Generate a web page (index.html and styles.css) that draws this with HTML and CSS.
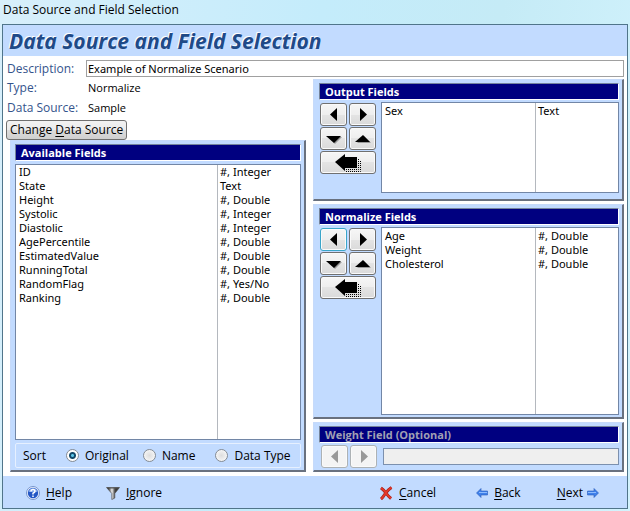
FILE: index.html
```html
<!DOCTYPE html>
<html lang="en">
<head>
<meta charset="utf-8">
<title>Data Source and Field Selection</title>
<link rel="stylesheet" href="styles.css">
</head>
<body>
<svg class="sprite" aria-hidden="true">
  <symbol id="left" viewBox="0 0 16 16"><path d="M11 1v13L4 7.500z" fill="currentColor"/></symbol>
  <symbol id="right" viewBox="0 0 16 16"><path d="M5 1v13l7-6.500z" fill="currentColor"/></symbol>
  <symbol id="down" viewBox="0 0 16 16"><path d="M2 6h14l-7 7z" fill="#999"/><path d="M0 5h15l-7 7z" fill="currentColor"/></symbol>
  <symbol id="up" viewBox="0 0 16 16"><path d="M2 12h14l-7-7z" fill="#999"/><path d="M0 11h15L8 4z" fill="currentColor"/></symbol>
  <symbol id="all" viewBox="0 0 26 18"><path d="M11 17.500h14.500V6M11 15.500h12.500V4" fill="none" stroke="#000" stroke-dasharray="1 1"/><path d="M0 8l10-8v3h12v11H10v3z" fill="#000"/></symbol>
</svg>
<div class="desktop">
  <div class="titlebar">Data Source and Field Selection</div>
  <main class="window">
    <h1 class="heading">Data Source and Field Selection</h1>
    <div class="content">
      <div class="description">
        <label class="label" for="description">Description:</label>
        <input class="text-input" id="description" type="text" value="Example of Normalize Scenario">
      </div>
      <div class="columns">
        <div class="left">
          <dl class="facts">
            <dt class="label">Type:</dt><dd>Normalize</dd>
            <dt class="label">Data Source:</dt><dd>Sample</dd>
          </dl>
          <button class="change" type="button">Change <u>D</u>ata Source</button>
          <section class="panel available">
            <h2 class="bar">Available Fields</h2>
            <div class="list">
              <table class="fields">
                <tr><td>ID</td><td>#, Integer</td></tr>
                <tr><td>State</td><td>Text</td></tr>
                <tr><td>Height</td><td>#, Double</td></tr>
                <tr><td>Systolic</td><td>#, Integer</td></tr>
                <tr><td>Diastolic</td><td>#, Integer</td></tr>
                <tr><td>AgePercentile</td><td>#, Double</td></tr>
                <tr><td>EstimatedValue</td><td>#, Double</td></tr>
                <tr><td>RunningTotal</td><td>#, Double</td></tr>
                <tr><td>RandomFlag</td><td>#, Yes/No</td></tr>
                <tr><td>Ranking</td><td>#, Double</td></tr>
              </table>
            </div>
            <div class="sort" role="radiogroup" aria-labelledby="sort-label">
              <span class="sort-label" id="sort-label">Sort</span>
              <label class="choice"><input type="radio" name="sort" checked>Original</label>
              <label class="choice"><input type="radio" name="sort">Name</label>
              <label class="choice"><input type="radio" name="sort">Data Type</label>
            </div>
          </section>
        </div>
        <div class="right">
          <section class="panel output">
            <h2 class="bar">Output Fields</h2>
            <div class="picker">
              <div class="moves">
                <button class="move" type="button" aria-label="Remove from output"><svg class="glyph"><use href="#left"/></svg></button>
                <button class="move" type="button" aria-label="Add to output"><svg class="glyph"><use href="#right"/></svg></button>
                <button class="move" type="button" aria-label="Move output down"><svg class="glyph"><use href="#down"/></svg></button>
                <button class="move" type="button" aria-label="Move output up"><svg class="glyph"><use href="#up"/></svg></button>
                <button class="move wide" type="button" aria-label="Remove all output"><svg class="glyph-all"><use href="#all"/></svg></button>
              </div>
              <div class="list">
                <table class="fields"><tr><td>Sex</td><td>Text</td></tr></table>
              </div>
            </div>
          </section>
          <section class="panel normalize">
            <h2 class="bar">Normalize Fields</h2>
            <div class="picker">
              <div class="moves">
                <button class="move active" type="button" aria-label="Remove from normalize"><svg class="glyph"><use href="#left"/></svg></button>
                <button class="move" type="button" aria-label="Add to normalize"><svg class="glyph"><use href="#right"/></svg></button>
                <button class="move" type="button" aria-label="Move normalize down"><svg class="glyph"><use href="#down"/></svg></button>
                <button class="move" type="button" aria-label="Move normalize up"><svg class="glyph"><use href="#up"/></svg></button>
                <button class="move wide" type="button" aria-label="Remove all normalize"><svg class="glyph-all"><use href="#all"/></svg></button>
              </div>
              <div class="list">
                <table class="fields">
                  <tr><td>Age</td><td>#, Double</td></tr>
                  <tr><td>Weight</td><td>#, Double</td></tr>
                  <tr><td>Cholesterol</td><td>#, Double</td></tr>
                </table>
              </div>
            </div>
          </section>
          <section class="panel weight">
            <h2 class="bar muted"><label for="weight">Weight Field (Optional)</label></h2>
            <div class="weight-row">
              <button class="move" type="button" disabled aria-label="Remove weight"><svg class="glyph"><use href="#left"/></svg></button>
              <button class="move" type="button" disabled aria-label="Set weight"><svg class="glyph"><use href="#right"/></svg></button>
              <input class="weight-input" id="weight" type="text" disabled>
            </div>
          </section>
        </div>
      </div>
    </div>
    <footer class="actions">
      <button class="action help" type="button">
        <svg class="icon" viewBox="0 0 14 14"><circle cx="7" cy="7" r="6.500" fill="#eef4ff" stroke="#7895cc"/><circle cx="7" cy="7" r="5.200" fill="#2457c5"/><path d="M2.500 6a4.600 4.600 0 0 1 9 0z" fill="#7da4eb"/><path d="M5 5.500Q5 3.500 7 3.500T9 5.300Q9 6.300 7 7.200V8.500M7 9.500V11" fill="none" stroke="#fff" stroke-width="1.500"/></svg>
        <span><u>H</u>elp</span>
      </button>
      <button class="action ignore" type="button">
        <svg class="icon" viewBox="0 0 14 14"><defs><linearGradient id="metal"><stop offset=".15" stop-color="#333"/><stop offset=".42" stop-color="#eee"/><stop offset=".65" stop-color="#444"/><stop offset="1" stop-color="#222"/></linearGradient></defs><path d="M.5 1.500h13L8.800 7.500v4.500l-3 1.500v-6z" fill="url(#metal)" stroke="#555" stroke-width=".7"/><path d="M1 2h12" stroke="#555"/></svg>
        <span><u>I</u>gnore</span>
      </button>
      <button class="action cancel" type="button">
        <svg class="icon" viewBox="0 0 14 14"><path d="M2 2Q5 4 7 7t5 5.500M12.500 1.500Q8.500 4 6 8t-4 5" fill="none" stroke="#9d1c15" stroke-width="3"/><path d="M2 2Q5 4 7 7t5 5.500M12.500 1.500Q8.500 4 6 8t-4 5" fill="none" stroke="#e2382b" stroke-width="2"/></svg>
        <span><u>C</u>ancel</span>
      </button>
      <button class="action back" type="button">
        <svg class="icon-arrow" viewBox="0 0 12 10"><path d="M.5 5L5 .5v2.500h6.500v4H5v2.500z" fill="#3f80ea" stroke="#2a5cb8" stroke-width=".6"/><path d="M3 4.500h8" stroke="#8dbcff"/></svg>
        <span><u>B</u>ack</span>
      </button>
      <button class="action next" type="button">
        <span><u>N</u>ext</span>
        <svg class="icon-arrow" viewBox="0 0 12 10"><path d="M11.500 5L7 .5v2.500H.5v4H7v2.500z" fill="#3f80ea" stroke="#2a5cb8" stroke-width=".6"/><path d="M1 4.500h8" stroke="#8dbcff"/></svg>
      </button>
    </footer>
  </main>
</div>
</body>
</html>
```

FILE: styles.css
```css
* { box-sizing: border-box; }

body {
  margin: 0;
  color: #000;
  font: 12px/16px "Open Sans", "Noto Sans", sans-serif;
}

button, input { font: inherit; color: inherit; }

h1, h2, dl, dd { margin: 0; }

u { text-underline-offset: 2px; }

.sprite { display: none; }

.desktop {
  display: flex;
  flex-direction: column;
  min-height: 100vh;
  padding: 0 2px 2px;
  background: linear-gradient(100deg, #d8effb, #c4ecfb 45%, #c5ebf6 70%, #d3f3fd);
}

.titlebar {
  height: 24px;
  padding: 2px 1px;
}

.window {
  flex: 1;
  display: flex;
  flex-direction: column;
  border: 1px solid #50758a;
  background: #fff;
}

.heading {
  height: 31px;
  padding-left: 6px;
  background: #c2dbff;
  color: #204a87;
  font: italic bold 21px/33px "Open Sans", "Noto Sans", sans-serif;
  text-shadow: -1px -1px #fff;
}

.content {
  flex: 1;
  display: flex;
  flex-direction: column;
  padding: 4px 3px;
}

.label { color: #34548c; }

.description {
  display: grid;
  grid-template-columns: 79px 1fr;
  padding-left: 1px;
  line-height: 17px;
}

.text-input {
  min-width: 0;
  height: 17px;
  padding: 0 1px;
  border: 1px solid #a0a0a0;
  background: #fff;
  font: 11px/15px "Noto Sans", sans-serif;
}

.columns {
  flex: 1;
  display: grid;
  grid-template-columns: 300fr 311fr;
  gap: 7px;
  padding-top: 1px;
}

.left, .right {
  display: flex;
  flex-direction: column;
  min-width: 0;
}

.right { gap: 3px; padding-top: 1px; }

.facts {
  display: grid;
  grid-template-columns: 81px 1fr;
  padding-left: 1px;
  line-height: 20px;
}

.facts dd { font-size: 11px; }

.change {
  align-self: flex-start;
  height: 20px;
  margin-top: 2px;
  padding: 0 3px;
  border: 1px solid #707070;
  border-radius: 3px;
  background: linear-gradient(#f2f2f2, #ebebeb 50%, #ddd 50%, #cfcfcf);
  line-height: 18px;
}

.panel {
  display: flex;
  flex-direction: column;
  padding: 3px 3px 2px 5px;
  border: 1px solid #c6dafa;
  border-right: 2px solid #69717f;
  border-bottom: 2px solid #69717f;
  background: #c2dbff;
}

.available { flex: 1; margin-left: 4px; padding-left: 4px; gap: 3px; }
.output { height: 122px; padding-bottom: 6px; }
.normalize { flex: 1; }

.bar {
  height: 17px;
  padding-left: 5px;
  border: 1px solid #76859c;
  border-right-color: #fff;
  border-bottom-color: #fff;
  background: #000080;
  color: #fff;
  font: bold 11px/15px "Open Sans", "Noto Sans", sans-serif;
}

.muted { color: #a0a0b4; }

.list {
  flex: 1;
  display: flex;
  min-width: 0;
  border: 1px solid #7286a6;
  background: linear-gradient(#b4b8be, #b4b8be) calc(100% - 82px) 0 / 1px 100% no-repeat #fff;
}

.fields {
  align-self: flex-start;
  width: 100%;
  border-collapse: collapse;
  table-layout: fixed;
  font: 11px/14px "Noto Sans", sans-serif;
}

.fields td { padding: 0 3px; }
.fields td:last-child { width: 83px; }

.sort {
  display: flex;
  align-items: center;
  height: 25px;
  padding-left: 7px;
  border: 1px solid #e6f0ff;
  border-radius: 2px;
  white-space: nowrap;
}

.sort-label { width: 43px; }

.choice {
  display: flex;
  align-items: center;
  gap: 6px;
  margin-right: 14px;
}

.choice + .choice { margin-right: 20px; }
.choice:last-child { margin-right: 0; }

.choice input {
  appearance: none;
  flex: none;
  width: 13px;
  height: 13px;
  margin: 0;
  border: 1px solid #858c94;
  border-radius: 50%;
  background: radial-gradient(circle, #ddd, #fff);
}

.choice input:checked {
  background: radial-gradient(circle, #5cc4e6 0 1px, #12496b 2px 3px, #fff 4px);
}

.picker {
  flex: 1;
  display: grid;
  grid-template-columns: 56px 1fr;
  gap: 5px;
  padding: 2px 0 0 1px;
}

.moves {
  display: grid;
  grid-template-columns: 1fr 1fr;
  align-content: start;
  gap: 1px 2px;
  padding-top: 1px;
}

.picker .list { padding-top: 1px; }

.move {
  display: flex;
  align-items: center;
  justify-content: center;
  height: 23px;
  padding: 0;
  border: 1px solid #707070;
  border-radius: 3px;
  background: linear-gradient(#f6f6f6, #eee 50%, #e4e4e4 50%, #dadada);
  box-shadow: inset 0 0 0 1px #fafafa;
}

.move.active { border-color: #3aa5c9; }
.move:disabled { border-color: #adb2b5; background: #f4f4f4; color: #999; }

.wide { grid-column: span 2; }

.glyph { width: 16px; height: 16px; }
.glyph-all { width: 26px; height: 18px; }

.weight-row {
  display: grid;
  grid-template-columns: 27px 27px 1fr;
  align-items: center;
  gap: 2px;
  padding: 2px 0 0 2px;
}

.weight-input {
  min-width: 0;
  height: 17px;
  margin-left: 4px;
  border: 1px solid #7c90ae;
  background: #efefef;
}

.actions {
  display: flex;
  align-items: center;
  height: 32px;
  padding: 1px 28px 0 23px;
  background: #c2dbff;
}

.action {
  display: flex;
  align-items: center;
  gap: 6px;
  padding: 0;
  border: 0;
  background: none;
}

.ignore { margin-left: 34px; }
.cancel { margin-left: auto; }
.back { margin-left: 40px; }
.next { margin-left: 36px; gap: 4px; }

.icon { width: 14px; height: 14px; }
.icon-arrow { width: 12px; height: 10px; }
```
